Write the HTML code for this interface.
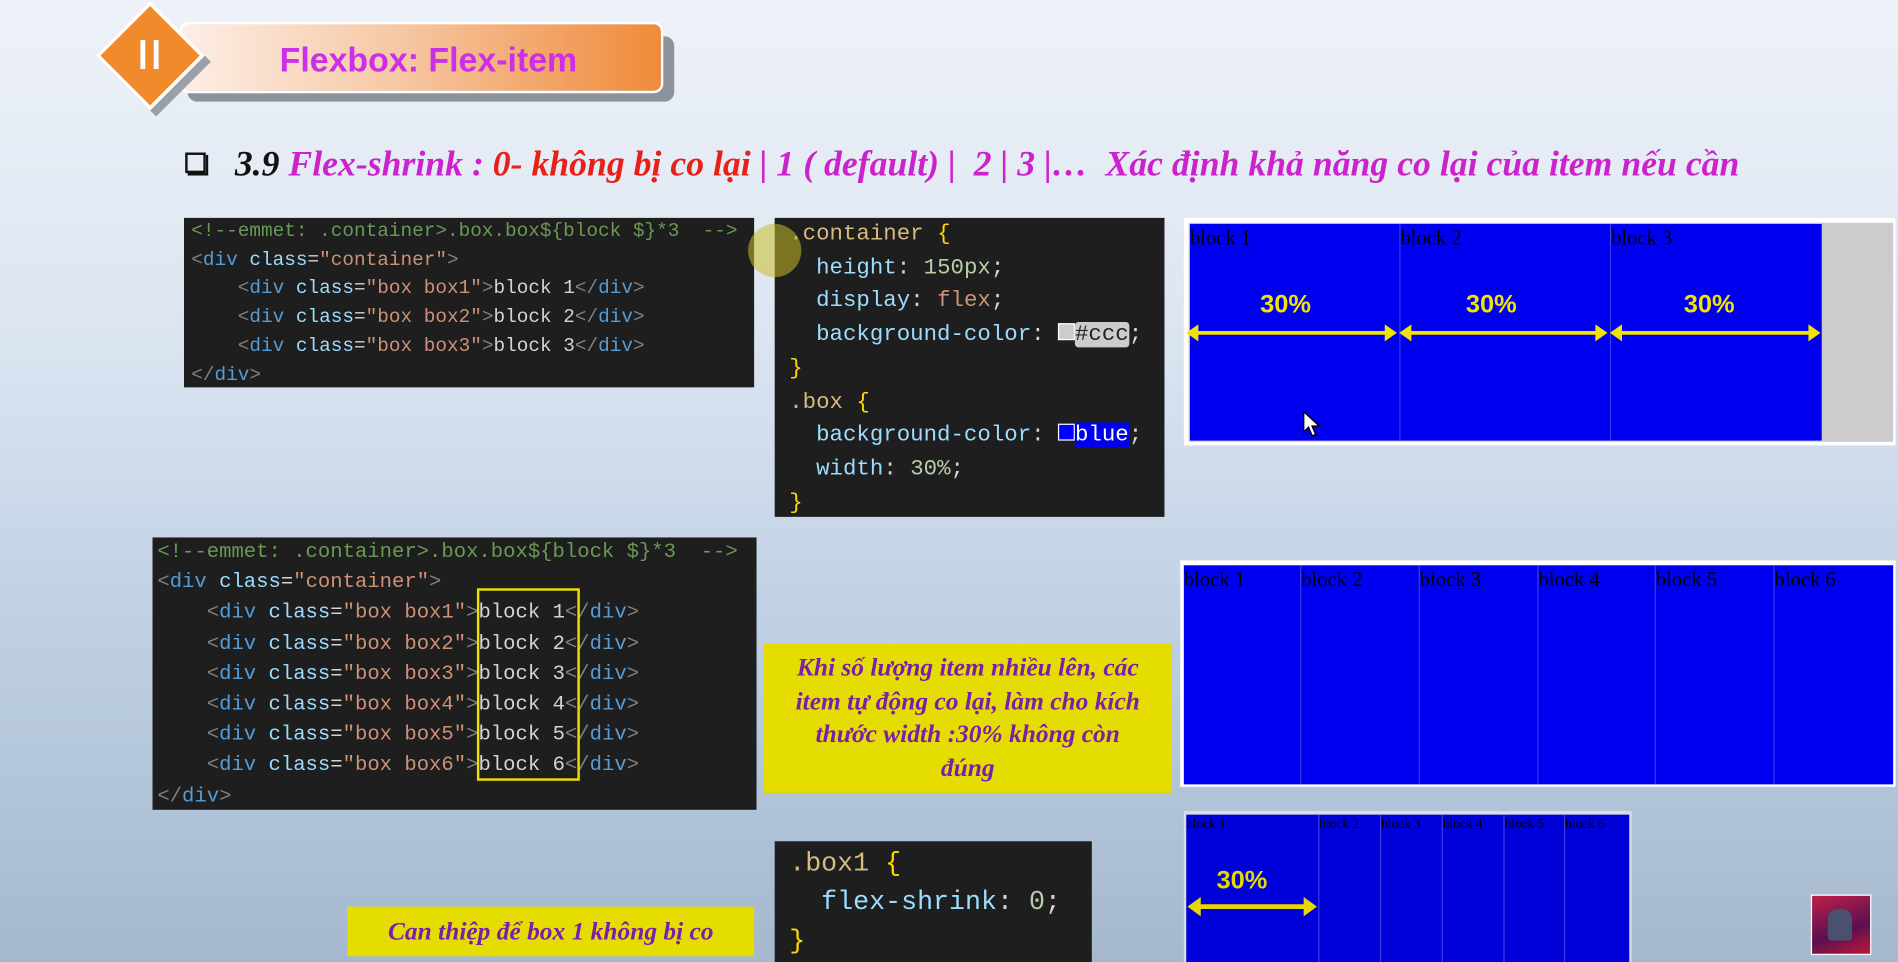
<!DOCTYPE html>
<html><head><meta charset="utf-8"><style>
*{margin:0;padding:0;box-sizing:border-box}
html,body{width:1898px;height:962px;overflow:hidden}
body{background:linear-gradient(180deg,#eef2f8 0%,#dbe5f1 35%,#bfd0e4 65%,#a5b8cd 100%)}
#s{position:absolute;left:0;top:0;width:1568px;height:795px;transform:scale(1.21046);transform-origin:0 0}
.a{position:absolute}
.code{position:absolute;background:#1e1e1e;font-family:"Liberation Mono",monospace;color:#d4d4d4;white-space:pre}
.c{color:#6a9955}.t{color:#569cd6}.b{color:#808080}.at{color:#9cdcfe}.st{color:#ce9178}
.sel{color:#d7ba7d}.br{color:#ffd700}.n{color:#b5cea8}
.blk{position:absolute;top:0;bottom:0;border-right:1px solid #3a3ae8;font-family:"Liberation Serif",serif;color:#000;padding-top:2px}
.pct{position:absolute;color:#f2e400;font-family:"Liberation Sans",sans-serif;font-weight:bold;font-size:21px}
.yl{position:absolute;background:#e6dd00;color:#7a1fa8;font-family:"Liberation Serif",serif;font-style:italic;font-weight:bold;text-align:center}
</style></head><body><div id="s">
<!-- header -->
<div class="a" style="left:155px;top:30px;width:402px;height:54px;background:#8e939b;border-radius:8px"></div>
<div class="a" style="left:148px;top:18px;width:400px;height:59px;border-radius:8px;background:linear-gradient(90deg,#fdeee6 0%,#f6c8a4 45%,#f08a3a 100%);border:2px solid #fff"></div>
<div class="a" style="width:64px;height:64px;background:#9aa0a8;transform:rotate(45deg);left:97px;top:19px"></div>
<div class="a" style="left:92px;top:14px;width:64px;height:64px;background:#f08a2a;border:3px solid #fff;transform:rotate(45deg)"></div>
<div class="a" style="left:116px;top:33px;width:4px;height:24px;background:#fff"></div>
<div class="a" style="left:127px;top:33px;width:4px;height:24px;background:#fff"></div>
<div class="a" style="left:231px;top:34px;font-family:'Liberation Sans',sans-serif;font-weight:bold;font-size:28px;color:#cc2fe8">Flexbox: Flex-item</div>
<!-- heading -->
<div class="a" style="left:153px;top:126px;width:17px;height:17px;border:2px solid #111;box-shadow:2px 2px 0 #111"></div>
<div class="a" style="left:194px;top:120px;font-family:'Liberation Serif',serif;font-style:italic;font-weight:bold;font-size:29.5px;color:#cc22cc;white-space:pre"><span style="color:#111">3.9 </span>Flex-shrink : <span style="color:#e8201a">0- không bị co lại</span> | 1 ( default) |  2 | 3 |…  Xác định khả năng co lại của item nếu cần</div>
<!-- code panel 1 -->
<div class="code" style="left:152px;top:180px;width:471px;height:140px;font-size:16px;line-height:23.7px;padding:0 0 0 6px"><span class="c">&lt;!--emmet: .container&gt;.box.box${block $}*3  --&gt;</span>
<span class="b">&lt;</span><span class="t">div</span> <span class="at">class</span>=<span class="st">"container"</span><span class="b">&gt;</span>
    <span class="b">&lt;</span><span class="t">div</span> <span class="at">class</span>=<span class="st">"box box1"</span><span class="b">&gt;</span>block 1<span class="b">&lt;/</span><span class="t">div</span><span class="b">&gt;</span>
    <span class="b">&lt;</span><span class="t">div</span> <span class="at">class</span>=<span class="st">"box box2"</span><span class="b">&gt;</span>block 2<span class="b">&lt;/</span><span class="t">div</span><span class="b">&gt;</span>
    <span class="b">&lt;</span><span class="t">div</span> <span class="at">class</span>=<span class="st">"box box3"</span><span class="b">&gt;</span>block 3<span class="b">&lt;/</span><span class="t">div</span><span class="b">&gt;</span>
<span class="b">&lt;/</span><span class="t">div</span><span class="b">&gt;</span></div>
<!-- css panel -->
<div class="code" style="left:640px;top:180px;width:322px;height:247px;font-size:18.5px;line-height:27.7px;padding-left:12px"><span class="sel">.container</span> <span class="br">{</span>
  <span class="at">height</span>: <span class="n">150px</span>;
  <span class="at">display</span>: <span class="st">flex</span>;
  <span class="at">background-color</span>: <span style="display:inline-block;width:14px;height:14px;background:#ccc;border:1px solid #fff"></span><span style="background:#ccc;color:#222;border-radius:3px">#ccc</span>;
<span class="br">}</span>
<span class="sel">.box</span> <span class="br">{</span>
  <span class="at">background-color</span>: <span style="display:inline-block;width:14px;height:14px;background:#00f;border:1px solid #fff"></span><span style="background:#0000ee;color:#fff">blue</span>;
  <span class="at">width</span>: <span class="n">30%</span>;
<span class="br">}</span></div>
<div class="a" style="left:618px;top:185px;width:44px;height:44px;border-radius:50%;background:rgba(200,190,40,0.55)"></div>
<!-- demo 1 -->
<div class="a" style="left:978px;top:180px;width:588px;height:188px;background:#fff"></div>
<div class="a" style="left:982px;top:184px;width:582px;height:181px;background:#ccc"></div>
<div class="a" style="left:983px;top:185px;width:522px;height:179px;background:#0000f0;font-size:17px">
<div class="blk" style="left:0;width:174px">block 1</div><div class="blk" style="left:174px;width:174px">block 2</div><div class="blk" style="left:348px;width:174px;border:none">block 3</div>
</div>
<div class="pct" style="left:1041px;top:240px">30%</div><div class="pct" style="left:1211px;top:240px">30%</div><div class="pct" style="left:1391px;top:240px">30%</div>
<svg class="a" style="left:978px;top:264px" width="530" height="22"><g stroke="#f2e400" stroke-width="3"><line x1="6" y1="11" x2="170" y2="11"/><line x1="182" y1="11" x2="344" y2="11"/><line x1="358" y1="11" x2="520" y2="11"/></g><g fill="#f2e400"><path d="M2 11l10-7v14zM176 11l-10-7v14zM178 11l10-7v14zM350 11l-10-7v14zM352 11l10-7v14zM526 11l-10-7v14z"/></g></svg>
<svg class="a" style="left:1075px;top:338px" width="18" height="24"><path d="M2 2v17l4-4 3 7 3-1-3-7h6z" fill="#fff" stroke="#000" stroke-width="1.2"/></svg>
<!-- code panel 2 -->
<div class="code" style="left:126px;top:444px;width:499px;height:225px;font-size:17px;line-height:25.2px;padding-left:4px"><span class="c">&lt;!--emmet: .container&gt;.box.box${block $}*3  --&gt;</span>
<span class="b">&lt;</span><span class="t">div</span> <span class="at">class</span>=<span class="st">"container"</span><span class="b">&gt;</span>
    <span class="b">&lt;</span><span class="t">div</span> <span class="at">class</span>=<span class="st">"box box1"</span><span class="b">&gt;</span>block 1<span class="b">&lt;/</span><span class="t">div</span><span class="b">&gt;</span>
    <span class="b">&lt;</span><span class="t">div</span> <span class="at">class</span>=<span class="st">"box box2"</span><span class="b">&gt;</span>block 2<span class="b">&lt;/</span><span class="t">div</span><span class="b">&gt;</span>
    <span class="b">&lt;</span><span class="t">div</span> <span class="at">class</span>=<span class="st">"box box3"</span><span class="b">&gt;</span>block 3<span class="b">&lt;/</span><span class="t">div</span><span class="b">&gt;</span>
    <span class="b">&lt;</span><span class="t">div</span> <span class="at">class</span>=<span class="st">"box box4"</span><span class="b">&gt;</span>block 4<span class="b">&lt;/</span><span class="t">div</span><span class="b">&gt;</span>
    <span class="b">&lt;</span><span class="t">div</span> <span class="at">class</span>=<span class="st">"box box5"</span><span class="b">&gt;</span>block 5<span class="b">&lt;/</span><span class="t">div</span><span class="b">&gt;</span>
    <span class="b">&lt;</span><span class="t">div</span> <span class="at">class</span>=<span class="st">"box box6"</span><span class="b">&gt;</span>block 6<span class="b">&lt;/</span><span class="t">div</span><span class="b">&gt;</span>
<span class="b">&lt;/</span><span class="t">div</span><span class="b">&gt;</span></div>
<div class="a" style="left:394px;top:486px;width:85px;height:159px;border:2px solid #f0e000"></div>
<!-- yellow note -->
<div class="yl" style="left:631px;top:532px;width:337px;height:123px;font-size:21px;line-height:27.5px;padding:6px 20px 0">Khi số lượng item nhiều lên, các item tự động co lại, làm cho kích thước width :30% không còn đúng</div>
<!-- demo 2 -->
<div class="a" style="left:975px;top:463px;width:591px;height:187px;background:#fff"></div>
<div class="a" style="left:978px;top:467px;width:586px;height:181px;background:#0000f0;font-size:17px">
<div class="blk" style="left:0;width:97px">block 1</div><div class="blk" style="left:97px;width:98px">block 2</div><div class="blk" style="left:195px;width:98px">block 3</div><div class="blk" style="left:293px;width:97px">block 4</div><div class="blk" style="left:390px;width:98px">block 5</div><div class="blk" style="left:488px;width:98px;border:none">block 6</div>
</div>
<!-- css panel 3 -->
<div class="code" style="left:640px;top:695px;width:262px;height:100px;font-size:22px;line-height:32px;padding-left:12px;padding-top:3px"><span class="sel">.box1</span> <span class="br">{</span>
  <span class="at">flex-shrink</span>: <span class="n">0</span>;
<span class="br">}</span></div>
<!-- demo 3 -->
<div class="a" style="left:978px;top:670px;width:370px;height:125px;background:#d8dde4"></div>
<div class="a" style="left:980px;top:673px;width:366px;height:122px;background:#0000d8;font-size:11px">
<div class="blk" style="left:0;width:110px">block 1</div><div class="blk" style="left:110px;width:51px">block 2</div><div class="blk" style="left:161px;width:51px">block 3</div><div class="blk" style="left:212px;width:51px">block 4</div><div class="blk" style="left:263px;width:50px">block 5</div><div class="blk" style="left:313px;width:53px;border:none">block 6</div>
</div>
<div class="pct" style="left:1005px;top:716px;color:#e6d800">30%</div>
<svg class="a" style="left:980px;top:738px" width="112" height="22"><line x1="8" y1="11" x2="100" y2="11" stroke="#e6d800" stroke-width="4"/><path d="M1 11l11-8v16zM108 11l-11-8v16z" fill="#e6d800"/></svg>
<!-- bottom yellow -->
<div class="yl" style="left:287px;top:749px;width:336px;height:41px;font-size:21px;line-height:41px">Can thiệp để box 1 không bị co</div>
<!-- subscribe thumb -->
<div class="a" style="left:1496px;top:739px;width:50px;height:50px;background:linear-gradient(160deg,#c0204a,#5a1050 60%,#c01838);border:1px solid #fff"></div>
<div class="a" style="left:1510px;top:751px;width:20px;height:26px;border-radius:8px 8px 3px 3px;background:#4a5070"></div>
</div></body></html>
